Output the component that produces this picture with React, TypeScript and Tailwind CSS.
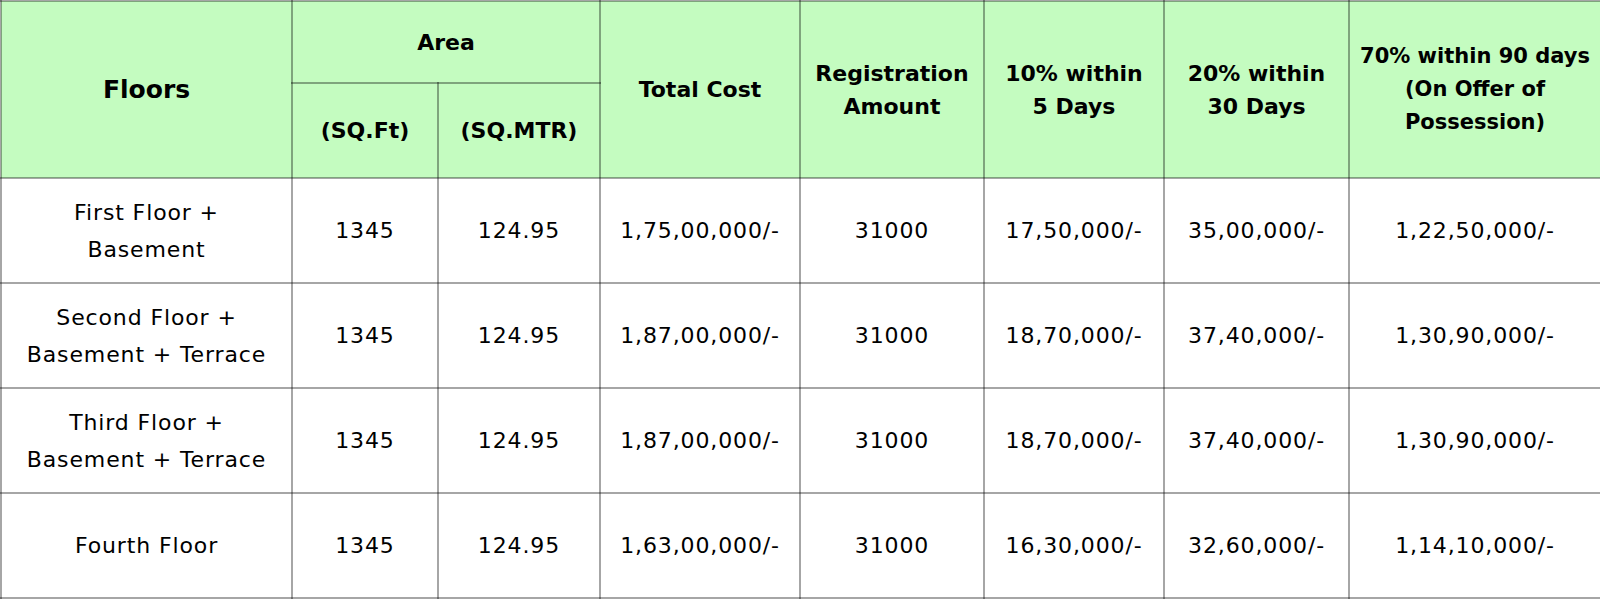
import React from "react";

const rows = [
  {
    floor: ["First Floor +", "Basement"],
    sqft: "1345",
    sqmtr: "124.95",
    total: "1,75,00,000/-",
    reg: "31000",
    p10: "17,50,000/-",
    p20: "35,00,000/-",
    p70: "1,22,50,000/-",
  },
  {
    floor: ["Second Floor +", "Basement + Terrace"],
    sqft: "1345",
    sqmtr: "124.95",
    total: "1,87,00,000/-",
    reg: "31000",
    p10: "18,70,000/-",
    p20: "37,40,000/-",
    p70: "1,30,90,000/-",
  },
  {
    floor: ["Third Floor +", "Basement + Terrace"],
    sqft: "1345",
    sqmtr: "124.95",
    total: "1,87,00,000/-",
    reg: "31000",
    p10: "18,70,000/-",
    p20: "37,40,000/-",
    p70: "1,30,90,000/-",
  },
  {
    floor: ["Fourth Floor"],
    sqft: "1345",
    sqmtr: "124.95",
    total: "1,63,00,000/-",
    reg: "31000",
    p10: "16,30,000/-",
    p20: "32,60,000/-",
    p70: "1,14,10,000/-",
  },
];

const th =
  "border-2 border-black/35 bg-[#c4fcc0] text-center align-middle font-bold text-[21px] leading-[33px] text-black p-0";
const td =
  "border-2 border-black/35 bg-white text-center align-middle font-normal text-[22px] leading-[37px] tracking-[0.04em] text-black p-0";

export default function App() {
  return (
    <div
      className="w-[1600px] h-[600px] overflow-hidden bg-white"
      style={{ fontFamily: '"DejaVu Sans", "Liberation Sans", sans-serif' }}
    >
      <table className="w-[1600px] border-collapse table-fixed">
        <colgroup>
          <col className="w-[291px]" />
          <col className="w-[146px]" />
          <col className="w-[162px]" />
          <col className="w-[200px]" />
          <col className="w-[184px]" />
          <col className="w-[180px]" />
          <col className="w-[185px]" />
          <col className="w-[252px]" />
        </colgroup>
        <thead>
          <tr className="h-[82px]">
            <th rowSpan={2} className={th + " text-[25px]"}>
              Floors
            </th>
            <th colSpan={2} className={th + " text-[22px]"}>
              Area
            </th>
            <th rowSpan={2} className={th + " text-[22px]"}>
              Total Cost
            </th>
            <th rowSpan={2} className={th + " text-[22px]"}>
              Registration
              <br />
              Amount
            </th>
            <th rowSpan={2} className={th + " text-[22px]"}>
              10% within
              <br />5 Days
            </th>
            <th rowSpan={2} className={th + " text-[22px]"}>
              20% within
              <br />
              30 Days
            </th>
            <th rowSpan={2} className={th}>
              70% within 90 days
              <br />
              (On Offer of
              <br />
              Possession)
            </th>
          </tr>
          <tr className="h-[95px]">
            <th className={th + " text-[22px]"}>(SQ.Ft)</th>
            <th className={th + " text-[22px]"}>(SQ.MTR)</th>
          </tr>
        </thead>
        <tbody>
          {rows.map((r, i) => (
            <tr key={i} className="h-[105px]">
              <td className={td}>
                {r.floor.map((l, j) => (
                  <div key={j}>{l}</div>
                ))}
              </td>
              <td className={td}>{r.sqft}</td>
              <td className={td}>{r.sqmtr}</td>
              <td className={td}>{r.total}</td>
              <td className={td}>{r.reg}</td>
              <td className={td}>{r.p10}</td>
              <td className={td}>{r.p20}</td>
              <td className={td}>{r.p70}</td>
            </tr>
          ))}
        </tbody>
      </table>
    </div>
  );
}
